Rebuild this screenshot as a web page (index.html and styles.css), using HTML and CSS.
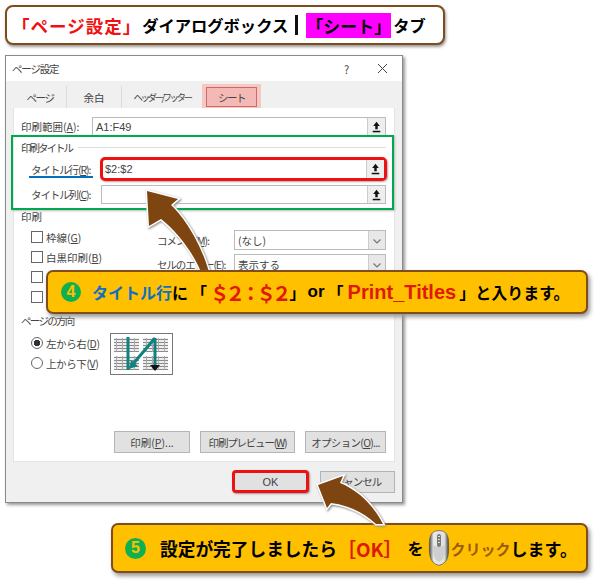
FILE: index.html
```html
<!DOCTYPE html>
<html lang="ja">
<head>
    <meta charset="UTF-8">
    <title>ページ設定 - シートタブ</title>
    <link rel="stylesheet" href="styles.css">
</head>
<body>
    <svg class="defs" width="0" height="0">
        <symbol id="pick" viewBox="0 0 18 18">
            <path d="M9 3.5 L12.5 8 H10.3 V11.5 H7.7 V8 H5.5 Z" fill="#111"/>
            <rect x="5" y="13" width="8" height="1.6" fill="#111"/>
        </symbol>
        <symbol id="chevron" viewBox="0 0 16 20">
            <path d="M4.5 8.5 L8 12 L11.5 8.5" fill="none" stroke="#777" stroke-width="1.2"/>
        </symbol>
        <pattern id="sheet" width="6" height="3" patternUnits="userSpaceOnUse">
            <rect width="6" height="3" fill="#eee"/>
            <path d="M0 .5H6" stroke="#888" stroke-width="1"/>
            <path d="M.5 0V3" stroke="#aaa" stroke-width="1"/>
        </pattern>
    </svg>

    <div class="page">
        <div class="heading">
            <span class="red">「ページ設定」</span><span>ダイアログボックス</span><span class="bar"></span><span class="magenta">「シート」</span><span>タブ</span>
        </div>

        <div class="dialog">
            <div class="dialog-title">
                <span>ページ設定</span>
                <span class="help">?</span>
                <svg class="close" width="11" height="11" viewBox="0 0 11 11"><path d="M1 1 L10 10 M10 1 L1 10" stroke="#444" stroke-width="1"/></svg>
            </div>
            <div class="tabs">
                <div class="tab tab-page">ページ</div>
                <div class="tab tab-margin">余白</div>
                <div class="tab tab-header">ヘッダー/フッター</div>
                <div class="tab-active"><span>シート</span></div>
            </div>
            <div class="panel">
                <div class="row row-range">
                    <label class="range-label">印刷範囲(<u>A</u>):</label>
                    <div class="input">A1:F49<span class="pick"><svg width="18" height="18"><use href="#pick"/></svg></span></div>
                </div>

                <div class="group-title">印刷タイトル</div>
                <div class="row row-title">
                    <label class="title-label">タイトル行(<u>R</u>):</label>
                    <div class="input marked">$2:$2<span class="pick"><svg width="18" height="18"><use href="#pick"/></svg></span></div>
                </div>
                <div class="row row-col">
                    <label class="title-label">タイトル列(<u>C</u>):</label>
                    <div class="input"><span class="pick"><svg width="18" height="18"><use href="#pick"/></svg></span></div>
                </div>

                <div class="section-title">印刷</div>
                <div class="print-options">
                    <div class="checks">
                        <div class="check"><i class="box"></i>枠線(<u>G</u>)</div>
                        <div class="check"><i class="box"></i>白黒印刷(<u>B</u>)</div>
                        <div class="check"><i class="box"></i></div>
                        <div class="check"><i class="box"></i></div>
                    </div>
                    <div class="selects">
                        <div class="select-row">
                            <label>コメント(<u>M</u>):</label>
                            <div class="select">(なし)<span class="drop"><svg width="16" height="20"><use href="#chevron"/></svg></span></div>
                        </div>
                        <div class="select-row">
                            <label>セルのエラー(<u>E</u>):</label>
                            <div class="select">表示する<span class="drop"><svg width="16" height="20"><use href="#chevron"/></svg></span></div>
                        </div>
                    </div>
                </div>

                <div class="section-title orient-title">ページの方向</div>
                <div class="orient">
                    <div class="radios">
                        <div class="radio"><i class="dot on"></i>左から右(<u>D</u>)</div>
                        <div class="radio"><i class="dot"></i>上から下(<u>V</u>)</div>
                    </div>
                    <svg class="order" width="63" height="42" viewBox="0 0 63 42">
                        <rect x=".5" y=".5" width="62" height="41" fill="#fff" stroke="#777"/>
                        <rect x="4" y="5" width="25" height="14" fill="url(#sheet)"/>
                        <rect x="33" y="5" width="25" height="14" fill="url(#sheet)"/>
                        <rect x="4" y="23" width="25" height="14" fill="url(#sheet)"/>
                        <rect x="33" y="23" width="25" height="14" fill="url(#sheet)"/>
                        <path d="M18 4 V37" stroke="#12807c" stroke-width="3" fill="none"/>
                        <path d="M45 5 L23 31" stroke="#12807c" stroke-width="3" fill="none"/>
                        <path d="M45 5 V33" stroke="#12807c" stroke-width="3" fill="none"/>
                        <path d="M19 36 L21 27 L28 33 Z" fill="#12807c"/>
                        <path d="M40 32 L50 32 L45 38 Z" fill="#111"/>
                    </svg>
                </div>

                <div class="panel-buttons">
                    <div class="btn btn-print">印刷(<u>P</u>)...</div>
                    <div class="btn btn-preview">印刷プレビュー(<u>W</u>)</div>
                    <div class="btn btn-option">オプション(<u>O</u>)...</div>
                </div>
            </div>
            <div class="dialog-buttons">
                <div class="btn btn-ok">OK</div>
                <div class="btn btn-cancel">キャンセル</div>
            </div>
        </div>

        <div class="callout callout-done">
            <span class="num num-done">5</span>
            <span>設定が完了しましたら</span><span class="red-text ok-text">［OK］</span><span class="wo">を</span>
            <svg class="mouse" width="22" height="36" viewBox="0 0 22 36">
                <defs>
                    <linearGradient id="shell" x1="0" x2="1" y1="0" y2="0">
                        <stop offset="0" stop-color="#4a4a4a"/>
                        <stop offset=".22" stop-color="#e8e8e8"/>
                        <stop offset=".78" stop-color="#e0e0e0"/>
                        <stop offset="1" stop-color="#3e3e3e"/>
                    </linearGradient>
                </defs>
                <path d="M11 .6 C18 .6 20.5 5 20.6 13 C20.8 22 21.5 33 11 35.4 C.5 33 1.2 22 1.4 13 C1.5 5 4 .6 11 .6 Z" fill="url(#shell)" stroke="#555" stroke-width=".7"/>
                <path d="M5 15 C8 17 14 17 17 15 C17 24 16 30 11 32 C6 30 5 24 5 15 Z" fill="#cfcfcf"/>
                <rect x="9" y="4" width="4" height="13" rx="2" fill="#7a7a7a"/>
                <path d="M10 6.5H12M10 9.5H12M10 12.5H12" stroke="#ddd" stroke-width="1"/>
            </svg>
            <span class="click-text">クリック</span><span>します。</span>
        </div>

        <div class="green-box"></div>
        <div class="blue-line"></div>

        <!-- arrows sit over the dialog, callouts on top of them -->
        <svg class="arrows" width="600" height="584" viewBox="0 0 600 584">
            <path d="M147 191 L178 199 L171 205 C182 215 200 240 209 272 L201 272 C192 250 175 230 161 219 L149 226 Z"/>
            <path d="M318 485 L343 476 L340 483 C358 490 374 506 383 524 L376 524 C362 511 347 505 331 503 L327 508 Z"/>
        </svg>

        <div class="callout callout-title">
            <span class="num num-title">4</span>
            <span class="blue-text">タイトル行</span><span>に</span><span class="open">「</span><span class="red-text cell-ref">＄２：＄２</span><span>」</span><span class="latin">or</span><span class="open-print">「</span><span class="red-text latin print-name">Print_Titles</span><span class="close-print">」</span><span>と入ります。</span>
        </div>
    </div>
</body>
</html>
```

FILE: styles.css
```css
body {
    margin: 0;
    padding: 0;
    background: #fff;
    font-family: "Noto Sans CJK JP", "Liberation Sans", sans-serif;
    color: #333;
}
u {
    text-decoration: underline;
}
i {
    font-style: normal;
}
.defs {
    display: block;
    position: absolute;
}
.page {
    position: relative;
    width: 600px;
    height: 584px;
    overflow: hidden;
    padding-top: 5px;
    box-sizing: border-box;
}

/* heading bar */
.heading {
    display: flex;
    align-items: center;
    box-sizing: border-box;
    width: 440px;
    height: 40px;
    margin-left: 5px;
    padding-left: 5px;
    background: #fff;
    border: 2px solid #7f4c1c;
    border-radius: 8px;
    box-shadow: 1px 2px 3px #999;
    color: #000;
    font-size: 16.3px;
    font-weight: 700;
    white-space: nowrap;
}
.heading .red {
    color: #f01010;
    font-size: 17.5px;
    letter-spacing: 1px;
    margin-right: 1px;
}
.bar {
    width: 3px;
    height: 20px;
    margin: 0 8px 0 7px;
    background: #111;
}
.magenta {
    background: #ff00ff;
    height: 25px;
    line-height: 25px;
    font-size: 17px;
    margin-right: 2px;
}

/* dialog */
.dialog {
    box-sizing: border-box;
    width: 398px;
    height: 448px;
    margin: 10px 0 0 5px;
    background: #f0f0f0;
    border: 1px solid #8a8a8a;
    box-shadow: 2px 2px 3px #999;
    font-size: 10.5px;
    color: #444;
}
.dialog-title {
    display: flex;
    align-items: center;
    height: 25px;
    padding-left: 6px;
    background: #fff;
    letter-spacing: -1.2px;
}
.help {
    margin-left: auto;
    font-size: 11px;
}
.close {
    margin: 0 14px 0 29px;
}
.tabs {
    display: flex;
    align-items: flex-end;
    height: 27px;
    padding-left: 8px;
}
.tab {
    display: flex;
    align-items: center;
    justify-content: center;
    height: 22px;
    background: #f0f0f0;
    border-right: 1px solid #dcdcdc;
    box-sizing: border-box;
    white-space: nowrap;
}
.tab-page { width: 53px; letter-spacing: -1.5px; }
.tab-margin { width: 55px; }
.tab-header {
    width: 80px;
    border-right: 0;
    font-size: 9.5px;
    letter-spacing: -2.5px;
}
.tab-active {
    display: flex;
    width: 59px;
    height: 24px;
    padding: 3px 4px 1px;
    box-sizing: border-box;
    background: #f6c8c4;
    letter-spacing: -1.5px;
}
.tab-active span {
    flex: 1;
    display: flex;
    align-items: center;
    justify-content: center;
    background: #f4b9b5;
    border: 1px solid #cc6a66;
}
.panel {
    display: flex;
    flex-direction: column;
    box-sizing: border-box;
    height: 354px;
    margin: 0 7px;
    padding: 9px 8px 0 7px;
    background: #fff;
    border: 1px solid #e4e4e4;
    border-top: 0;
}

/* reference fields */
.row {
    display: flex;
    align-items: center;
}
.row-range { height: 19px; }
.row-title { height: 24px; margin-top: 2px; }
.row-col { height: 19px; margin-top: 4px; }
.row-col .input { margin-left: 1px; }
.range-label { width: 71px; }
.title-label {
    width: 69px;
    padding-left: 10px;
    white-space: nowrap;
    letter-spacing: -1.1px;
}
.input {
    flex: 1;
    display: flex;
    align-items: center;
    box-sizing: border-box;
    height: 100%;
    padding-left: 3px;
    background: #fff;
    border: 1px solid #bbb;
    font-family: "Liberation Sans", sans-serif;
    font-size: 11px;
    color: #444;
}
.input.marked {
    border: 3px solid #ee1111;
    border-radius: 5px;
    margin-right: -1px;
    padding-left: 2px;
    box-shadow: 1px 1px 2px #aaa;
}
.pick {
    display: flex;
    align-items: center;
    justify-content: center;
    width: 17px;
    height: 100%;
    margin-left: auto;
    background: #eee;
    border-left: 1px solid #ccc;
}
.group-title {
    display: flex;
    align-items: center;
    height: 16px;
    margin-top: 3px;
    letter-spacing: -2px;
}
.group-title::after {
    content: "";
    flex: 1;
    margin-left: 6px;
    border-top: 1px solid #ddd;
}
.section-title {
    height: 16px;
    line-height: 16px;
    margin-top: 5px;
}

/* print options */
.print-options {
    display: flex;
    height: 80px;
    margin-top: 2px;
}
.checks {
    width: 136px;
    padding-left: 10px;
    flex: none;
    box-sizing: border-box;
}
.check,
.radio {
    display: flex;
    align-items: center;
    height: 20px;
    white-space: nowrap;
}
.radio {
    letter-spacing: -.4px;
}
.box {
    width: 10px;
    height: 10px;
    margin-right: 3px;
    border: 1px solid #666;
    background: #fff;
}
.selects {
    flex: 1;
    margin-top: 3px;
}
.select-row {
    display: flex;
    align-items: center;
    height: 20px;
    margin-bottom: 4px;
}
.select-row label {
    width: 77px;
    flex: none;
    white-space: nowrap;
    letter-spacing: -1.1px;
}
.select {
    flex: 1;
    display: flex;
    align-items: center;
    box-sizing: border-box;
    height: 100%;
    padding-left: 3px;
    border: 1px solid #bbb;
}
.drop {
    display: flex;
    margin-left: auto;
    height: 100%;
    background: #e8e8e8;
    border-left: 1px solid #ccc;
}

/* orientation */
.orient-title {
    margin-top: 6px;
    letter-spacing: -1.7px;
}
.orient {
    display: flex;
    margin-top: 4px;
    padding-left: 10px;
}
.radios {
    width: 79px;
    flex: none;
}
.dot {
    box-sizing: border-box;
    width: 12px;
    height: 12px;
    margin-right: 3px;
    border: 1px solid #666;
    border-radius: 50%;
    background: #fff;
}
.dot.on {
    background: radial-gradient(circle, #333 3px, #fff 3.5px);
}
.order {
    display: block;
}

/* buttons */
.panel-buttons {
    display: flex;
    justify-content: flex-end;
    gap: 10px;
    margin-top: auto;
    margin-bottom: 8px;
}
.btn {
    display: flex;
    align-items: center;
    justify-content: center;
    box-sizing: border-box;
    height: 22px;
    background: #e1e1e1;
    border: 1px solid #b4b4b4;
    white-space: nowrap;
}
.btn-print { width: 76px; }
.btn-preview { width: 95px; letter-spacing: -1.2px; }
.btn-option { width: 81px; letter-spacing: -.7px; }
.dialog-buttons {
    display: flex;
    justify-content: flex-end;
    align-items: center;
    gap: 11px;
    padding: 8px 7px 0;
}
.btn-ok {
    width: 77px;
    height: 23px;
    border: 3px solid #ee1111;
    border-radius: 4px;
    box-shadow: 1px 1px 2px #999;
    font-family: "Liberation Sans", sans-serif;
    font-size: 11px;
}
.btn-cancel {
    width: 75px;
    letter-spacing: -1px;
}

/* annotations */
.green-box {
    position: absolute;
    left: 11px;
    top: 135px;
    width: 379px;
    height: 71px;
    border: 2px solid #00a850;
    box-shadow: 1px 1px 2px #bbb;
}
.blue-line {
    position: absolute;
    left: 29px;
    top: 176px;
    width: 64px;
    height: 2px;
    background: #0070c0;
}
.arrows {
    position: absolute;
    left: 0;
    top: 0;
    filter: drop-shadow(1px 1px 1px #888);
}
.arrows path {
    fill: #7f4510;
    stroke: #fff;
    stroke-width: 3px;
    paint-order: stroke;
}
.callout {
    display: flex;
    align-items: center;
    box-sizing: border-box;
    background: #ffc000;
    border: 2px solid #7f4c1c;
    border-radius: 7px;
    box-shadow: 2px 3px 4px #999;
    color: #000;
    font-weight: 700;
    white-space: nowrap;
}
.callout-title {
    position: absolute;
    left: 46px;
    top: 270px;
    width: 542px;
    height: 44px;
    padding-left: 13px;
    font-size: 16px;
}
.callout-done {
    position: relative;
    width: 477px;
    height: 50px;
    margin: 20px 0 0 111px;
    padding-left: 12px;
    font-size: 17.7px;
}
.num {
    display: flex;
    align-items: center;
    justify-content: center;
    flex: none;
    width: 20px;
    height: 20px;
    border-radius: 50%;
    background: #10b050;
    color: #ffc000;
    font-family: "Liberation Sans", sans-serif;
    font-size: 16px;
    font-weight: 700;
}
.num-title { margin-right: 11px; }
.num-done { width: 21px; height: 21px; margin-right: 14px; }
.blue-text { color: #0f6fc6; }
.red-text { color: #e01a00; }
.open { margin-left: 3px; }
.cell-ref {
    font-size: 19.5px;
    letter-spacing: -4px;
    margin-right: 2px;
    margin-left: 3px;
}
.latin {
    font-family: "Liberation Sans", sans-serif;
    font-size: 17px;
    margin-left: 2px;
}
.open-print { margin-left: 3px; }
.print-name {
    font-size: 20px;
    margin-left: 4px;
}
.close-print { margin-left: 3px; }
.ok-text {
    font-size: 19px;
}
.wo {
    font-size: 16px;
    margin-left: 5px;
}
.click-text {
    color: #9c5a10;
    font-size: 15px;
}
.callout-done span:last-of-type {
    font-size: 17px;
}
.mouse {
    flex: none;
    margin: 0 1px 0 4px;
}
```
